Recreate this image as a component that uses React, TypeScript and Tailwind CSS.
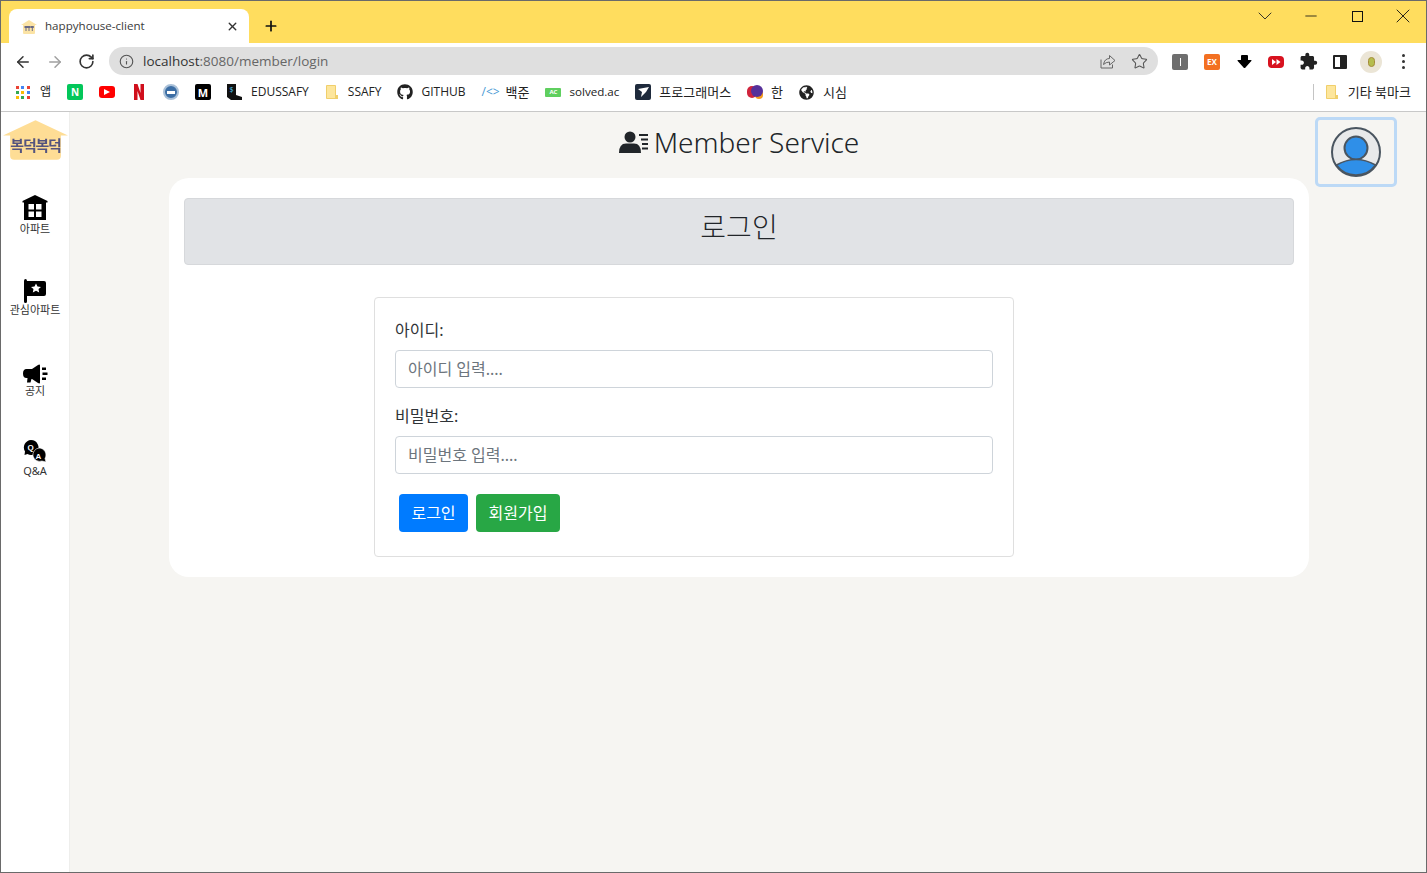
import React from "react";
import { FaGithub, FaGlobeAmericas } from "react-icons/fa";
import { MdExtension } from "react-icons/md";
import { ArrowLeft, ArrowRight, RotateCw, Info, Star, X, Plus, Minus, ChevronDown } from "lucide-react";

const UI = "font-['Open_Sans','Noto_Sans_CJK_KR',sans-serif]";
const PAGE = "font-['Noto_Sans','Noto_Sans_CJK_KR',sans-serif]";

function House({ className }: { className?: string }) {
  return (
    <svg viewBox="0 0 64 40" className={className}>
      <path d="M0 15 L32 0 L64 15 L57 15 L57 35 Q57 39 53 39 L11 39 Q7 39 7 35 L7 15 Z" fill="#fedd95" />
    </svg>
  );
}

function Favicon() {
  return (
    <svg viewBox="0 0 16 16" className="w-4 h-4">
      <path d="M0 6 L8 1 L16 6 L14 6 V14 Q14 15 13 15 H3 Q2 15 2 14 V6 Z" fill="#fbe3a5" />
      <path d="M3.5 7 H6.5 V9 H5.5 V12 H4.5 V9 H3.5 Z M6.5 7 H9.5 V9 H8.5 V12 H7.5 V9 H6.5 Z M9.8 7 H12.8 V9 H11.8 V12 H10.8 V9 H9.8 Z" fill="#6a6a86" />
    </svg>
  );
}

function Folder() {
  return (
    <svg width="14" height="16" viewBox="0 0 14 16" className="shrink-0">
      <path d="M1.5 1.5 H10.5 V14.5 H1.5 Z" fill="#fde69c" stroke="#f0cf6b" />
      <rect x="10" y="11" width="3" height="4" fill="#f0cf6b" />
    </svg>
  );
}

function Bookmark({ icon, label, size = "text-[12px]", gap = "gap-[8px]" }: { icon: React.ReactNode; label?: string; size?: string; gap?: string }) {
  return (
    <div className={`flex items-center ${gap} shrink-0`}>
      {icon}
      {label && <span className={`${size} leading-none text-[#222]`}>{label}</span>}
    </div>
  );
}

function Tile({ className, children }: { className: string; children?: React.ReactNode }) {
  return <div className={`flex items-center justify-center w-4 h-4 rounded-[2px] ${className}`}>{children}</div>;
}

function TabStrip() {
  return (
    <div className="flex h-[42px] bg-[#ffdd5e] relative">
      <div className="flex items-end pl-[8px]">
        <div className="flex items-center w-[240px] h-[34px] bg-white rounded-t-[8px] pl-[12px] pr-[9px]">
          <div className="w-4 h-4 mt-[2px]">
            <Favicon />
          </div>
          <span className="ml-[8px] text-[11.6px] text-[#3c3c3c] grow">happyhouse-client</span>
          <X size={13} strokeWidth={2.6} className="text-[#333] mr-[1px]" />
        </div>
      </div>
      <div className="flex items-center ml-[14px] mt-[8px]">
        <Plus size={16} strokeWidth={2.6} className="text-[#111]" />
      </div>
      <div className="ml-auto flex items-center h-[30px]">
        <div className="w-[46px] flex justify-center"><ChevronDown size={24} strokeWidth={0.9} className="text-[#222]" /></div>
        <div className="w-[46px] flex justify-center"><Minus size={18} strokeWidth={1.1} className="text-[#111]" /></div>
        <div className="w-[46px] flex justify-center"><div className="w-[11px] h-[11px] border border-[#111]" /></div>
        <div className="w-[46px] flex justify-center"><X size={24} strokeWidth={0.9} className="text-[#111]" /></div>
      </div>
    </div>
  );
}

function Toolbar() {
  return (
    <div className="flex items-center h-[37px] bg-white pl-[13px] pr-[13px]">
      <ArrowLeft size={18} strokeWidth={2} className="text-[#333]" />
      <ArrowRight size={18} strokeWidth={2} className="text-[#a0a0a0] ml-[14px]" />
      <RotateCw size={17} strokeWidth={2.3} className="text-[#333] ml-[14px]" />
      <div className="flex items-center h-[28px] w-[1049px] ml-[14px] mb-[1px] rounded-full bg-[#dfdfdf] pl-[10px] pr-[10px]">
        <Info size={15} strokeWidth={1.8} className="text-[#555]" />
        <span className="ml-[9px] text-[13.5px] text-[#333]">localhost<span className="text-[#666]">:8080/member/login</span></span>
        <svg width="16" height="15" viewBox="0 0 16 15" className="ml-auto" fill="none" stroke="#666" strokeWidth="1">
          <path d="M1 5.5 V14 H12.5 V10.5" />
          <path d="M3.5 10.5 Q4.5 4.5 9.5 4.5 V1.5 L15 6.5 L9.5 11 V8 Q6 8 3.5 10.5 Z" />
        </svg>
        <Star size={17} strokeWidth={1.5} className="ml-[15px] text-[#555]" />
      </div>
      <div className="ml-[14px] flex items-center gap-[16px]">
        <Tile className="bg-[#6e6e6e]"><div className="w-px h-2 bg-white" /></Tile>
        <Tile className="bg-[#f37021]"><span className="text-[8px] font-bold text-white leading-none">EX</span></Tile>
        <Tile className=""><svg width="15" height="15" viewBox="0 0 15 15"><path d="M4 2 Q4 1 5 1 H10 Q11 1 11 2 V6 H14 Q15 6 14.3 7 L8.5 13.5 Q7.5 14.5 6.5 13.5 L0.7 7 Q0 6 1 6 H4 Z" fill="#000" /></svg></Tile>
        <Tile className="bg-[#d8121f] h-[12px] rounded-[4px]"><svg width="9" height="6" viewBox="0 0 9 6"><path d="M0 0 L4 3 L0 6 Z M4.5 0 L8.5 3 L4.5 6 Z" fill="#fff" /></svg></Tile>
        <div className="w-4 h-4 flex items-center justify-center"><MdExtension size={19} className="text-[#222] shrink-0" /></div>
        <div className="ml-px w-[14px] h-[14px] border-[2px] border-[#222] border-r-[7px] rounded-[1px]" />
      </div>
      <div className="ml-[13px] flex items-center justify-center w-[22px] h-[22px] rounded-full bg-[#ebe5d6]">
        <div className="w-[7px] h-[10px] rounded-full bg-[#b5bd4e] border border-[#a58b3a]" />
      </div>
      <div className="ml-[20px] flex flex-col gap-[3px]">
        <div className="w-[3px] h-[3px] rounded-full bg-[#333]" />
        <div className="w-[3px] h-[3px] rounded-full bg-[#333]" />
        <div className="w-[3px] h-[3px] rounded-full bg-[#333]" />
      </div>
    </div>
  );
}

function Bookmarks() {
  return (
    <div className="flex items-center h-[32px] shrink-0 bg-white border-b border-[#c8c8c8] pl-[15px] pr-[15px] pb-[7px]">
      <div className="flex items-center gap-[16px]">
        <Bookmark
          gap="gap-[10px]"
          icon={
            <div className="grid grid-cols-3 gap-[2px] w-[14px]">
              <i className="w-[3px] h-[3px] bg-[#ea4335]" /><i className="w-[3px] h-[3px] bg-[#4285f4]" /><i className="w-[3px] h-[3px] bg-[#ea4335]" />
              <i className="w-[3px] h-[3px] bg-[#34a853]" /><i className="w-[3px] h-[3px] bg-[#fbbc05]" /><i className="w-[3px] h-[3px] bg-[#4285f4]" />
              <i className="w-[3px] h-[3px] bg-[#fbbc05]" /><i className="w-[3px] h-[3px] bg-[#34a853]" /><i className="w-[3px] h-[3px] bg-[#ea4335]" />
            </div>
          }
          label="앱"
        />
        <Tile className="bg-[#03c75a]"><span className="text-[10px] font-bold text-white leading-none">N</span></Tile>
        <Tile className="bg-[#f00] h-[12px] rounded-[3px]"><svg width="6" height="6" viewBox="0 0 6 6"><path d="M0 0 L6 3 L0 6 Z" fill="#fff" /></svg></Tile>
        <Tile className=""><svg width="10" height="16" viewBox="0 0 10 16"><path d="M0 0 H3.5 L6.5 9 V0 H10 V16 H6.5 L3.5 7 V16 H0 Z" fill="#d00f1c" /></svg></Tile>
        <div className="w-4 h-4 rounded-full bg-[#3c6ea5] border-[2px] border-[#a9c0d8] flex items-center justify-center"><div className="w-2 h-[3px] bg-white" /></div>
        <Tile className="bg-black"><span className="text-[11px] font-bold text-white leading-none">M</span></Tile>
        <Bookmark
          icon={
            <svg width="16" height="16" viewBox="0 0 16 16">
              <path d="M0 0 H9 V11 L15 13 V16 H4 L0 13 Z" fill="#111" />
              <text x="2.5" y="8" fontSize="7" fill="#4fc3f7">$</text>
            </svg>
          }
          label="EDUSSAFY"
        />
        <Bookmark gap="gap-[9px]" icon={<Folder />} label="SSAFY" />
        <Bookmark icon={<FaGithub size={16} className="text-[#222]" />} label="GITHUB" />
        <Bookmark size="text-[13px]" icon={<span className="text-[12px] leading-none text-[#4a9ad4] w-4">{"/<>"}</span>} label="백준" />
        <Bookmark
          size="text-[11.6px]"
          icon={<div className="w-4 h-[9px] bg-[#5fcf5f] rounded-[1px] flex items-center justify-center text-[6px] font-bold text-white leading-none">AC</div>}
          label="solved.ac"
        />
        <Bookmark
          size="text-[13px]"
          icon={<Tile className="bg-[#1e2a3c]"><svg width="11" height="10" viewBox="0 0 11 10"><path d="M0 2 L11 0 L8 5 L3 10 L4 5 Z" fill="#fff" /></svg></Tile>}
          label="프로그래머스"
        />
        <Bookmark
          size="text-[13px]"
          icon={
            <div className="relative w-4 h-4">
              <div className="absolute left-0 top-[2px] w-[10px] h-[12px] rounded-full bg-[#d0243c]" />
              <div className="absolute right-0 top-[6px] w-[8px] h-[9px] rounded-full bg-[#f59a1b]" />
              <div className="absolute right-0 top-[1px] w-[12px] h-[12px] rounded-full bg-[#56309a]" />
            </div>
          }
          label="한"
        />
        <Bookmark size="text-[13px]" gap="gap-[9px]" icon={<FaGlobeAmericas size={15} className="text-[#222]" />} label="시심" />
      </div>
      <div className="ml-auto flex items-center">
        <div className="w-px h-[16px] bg-[#c4c4c4] mr-[11px]" />
        <Bookmark size="text-[13px]" gap="gap-[9px]" icon={<Folder />} label="기타 북마크" />
      </div>
    </div>
  );
}

function BuildingIcon() {
  return (
    <svg width="26" height="25" viewBox="0 0 26 25">
      <path d="M0.5 6 L13 0 L25.5 6 V7.5 H24 V25 H2 V7.5 H0.5 Z" fill="#000" />
      <rect x="6.5" y="9" width="5.5" height="5.5" fill="#fff" />
      <rect x="14" y="9" width="5.5" height="5.5" fill="#fff" />
      <rect x="6.5" y="16.5" width="5.5" height="5.5" fill="#fff" />
      <rect x="14" y="16.5" width="5.5" height="5.5" fill="#fff" />
    </svg>
  );
}

function FlagIcon() {
  return (
    <svg width="24" height="24" viewBox="0 0 24 24">
      <path d="M1 2 Q1 0 2.5 0 Q4 0 4 2 H21 Q23 2 23 4 V15 Q23 17 21 17 H4 V22.5 Q4 24 2.5 24 Q1 24 1 22.5 Z" fill="#000" />
      <path d="M13 4.5 L14.5 7.5 L18 7.9 L15.5 10.1 L16.2 13.5 L13 11.8 L9.8 13.5 L10.5 10.1 L8 7.9 L11.5 7.5 Z" fill="#fff" />
    </svg>
  );
}

function HornIcon() {
  return (
    <svg width="25" height="20" viewBox="0 0 25 20">
      <path d="M3.5 5 H9 L15 1 Q17 0 17 1.5 V18.5 Q17 20 15 19 L9 15 H8.5 L7.5 18.5 H4 L4.5 14 H3.5 Q0 14 0 9.5 Q0 5 3.5 5 Z" fill="#000" />
      <rect x="19" y="3.5" width="4" height="2.5" fill="#000" />
      <rect x="19.5" y="8.5" width="5" height="2.5" fill="#000" />
      <rect x="19" y="13.5" width="4" height="2.5" fill="#000" />
    </svg>
  );
}

function QaIcon() {
  return (
    <svg width="24" height="23" viewBox="0 0 24 23">
      <path d="M8 0 a7.5 7.5 0 0 1 6 12 a7.5 7.5 0 0 1 -9.5 2 L1.5 15 L2 11.5 A7.5 7.5 0 0 1 8 0 Z" fill="#000" />
      <path d="M16 8 a7 7 0 0 1 6 10.5 L23 22 L19 21 A7 7 0 0 1 10 16 A7 7 0 0 1 16 8 Z" fill="#000" stroke="#fff" strokeWidth="0.6" />
      <text x="4.5" y="10" fontSize="8" fontWeight="700" fill="#fff" fontFamily="'Liberation Sans', sans-serif">Q</text>
      <text x="12.5" y="18.5" fontSize="8" fontWeight="700" fill="#fff" fontFamily="'Liberation Sans', sans-serif">A</text>
    </svg>
  );
}

function SideItem({ icon, label, className, labelClass }: { icon: React.ReactNode; label: string; className: string; labelClass: string }) {
  return (
    <div className={`flex flex-col items-center ${className}`}>
      <div className="h-[26px] flex items-end justify-center">{icon}</div>
      <span className={`text-[11px] leading-[14px] text-[#333] whitespace-nowrap ${labelClass}`}>{label}</span>
    </div>
  );
}

function Sidebar() {
  return (
    <div className="w-[69px] shrink-0 bg-white border-r border-[#eeeeec] flex flex-col items-center pt-[8px]">
      <div className="relative w-[65px] h-[41px] ml-[1px]">
        <House className="w-[65px] h-[41px]" />
        <span className="absolute left-0 right-0 top-[15px] text-center text-[15px] leading-[20px] font-bold tracking-[-1.2px] text-[#54547e] blur-[0.4px]">복덕복덕</span>
      </div>
      <SideItem className="mt-[33px]" labelClass="mt-[2px]" icon={<BuildingIcon />} label="아파트" />
      <SideItem className="mt-[41px]" labelClass="mt-0" icon={<FlagIcon />} label="관심아파트" />
      <SideItem className="mt-[41px]" labelClass="mt-0" icon={<HornIcon />} label="공지" />
      <SideItem className="mt-[39px]" labelClass="mt-px" icon={<QaIcon />} label="Q&A" />
    </div>
  );
}

function MemberIcon() {
  return (
    <svg width="29" height="22" viewBox="0 0 29 22">
      <circle cx="11" cy="6" r="5.5" fill="#212529" />
      <path d="M0 22 Q0 12.5 7 12.5 H15 Q22 12.5 22 22 Z" fill="#212529" />
      <rect x="20" y="3" width="9" height="2" fill="#212529" />
      <rect x="22" y="7.5" width="7" height="2" fill="#212529" />
      <rect x="23" y="12" width="6" height="2" fill="#212529" />
      <rect x="23" y="16.5" width="6" height="2" fill="#212529" />
    </svg>
  );
}

function Avatar() {
  return (
    <svg width="50" height="50" viewBox="0 0 50 50">
      <circle cx="25" cy="25" r="24" fill="#e8e9ea" stroke="#4a5560" strokeWidth="2" />
      <circle cx="25" cy="21" r="11.5" fill="#2f8fe8" stroke="#4a5560" strokeWidth="2" />
      <path d="M5.5 38 Q25 27 44.5 38 A24 24 0 0 1 5.5 38 Z" fill="#2f8fe8" stroke="#4a5560" strokeWidth="1.5" />
    </svg>
  );
}

function Field({ label, placeholder }: { label: string; placeholder: string }) {
  return (
    <div className="mb-[16px]">
      <label className="block text-[16px] leading-[24px] text-[#2f3337] mb-[8px]">{label}</label>
      <input
        placeholder={placeholder}
        className="block w-full h-[38px] px-[12px] text-[16px] bg-white border border-[#ced4da] rounded-[4px] placeholder:text-[#6c757d] outline-none"
      />
    </div>
  );
}

export default function App() {
  return (
    <div className={`w-[1427px] h-[873px] flex flex-col overflow-hidden border border-[#6a6a6a] ${UI}`}>
      <TabStrip />
      <Toolbar />
      <Bookmarks />
      <div className={`flex grow min-h-0 bg-[#f6f5f2] relative ${PAGE}`}>
        <Sidebar />
        <div className="grow flex flex-col items-center pr-[20px] pl-[2px]">
          <h1 className="flex items-center justify-center gap-[6px] h-[66px] pb-[6px] text-[28px] font-light text-[#212529] leading-none">
            <MemberIcon />
            Member Service
          </h1>
          <div className="w-[1140px] h-[399px] bg-white rounded-[20px] px-[15px] pt-[20px]">
            <div className="h-[67px] pb-[10px] flex items-center justify-center bg-[#e1e3e6] border border-[#d6d8db] rounded-[4px] text-[28px] font-light text-[#212529]">
              로그인
            </div>
            <div className="w-[640px] h-[260px] ml-[190px] mt-[32px] border border-[#dfdfdf] rounded-[4px] px-[20px] pt-[20px]">
              <Field label="아이디:" placeholder="아이디 입력...." />
              <Field label="비밀번호:" placeholder="비밀번호 입력...." />
              <div className="flex gap-[8px] ml-[4px] mt-[20px]">
                <button className="h-[38px] w-[69px] rounded-[4px] bg-[#007bff] text-white text-[16px] leading-none">로그인</button>
                <button className="h-[38px] w-[84px] rounded-[4px] bg-[#28a745] text-white text-[16px] leading-none">회원가입</button>
              </div>
            </div>
          </div>
        </div>
        <div className="absolute right-[29px] top-[5px] w-[82px] h-[70px] flex items-center justify-center border-[3px] border-[#bcd9f6] rounded-[5px]">
          <Avatar />
        </div>
      </div>
    </div>
  );
}
